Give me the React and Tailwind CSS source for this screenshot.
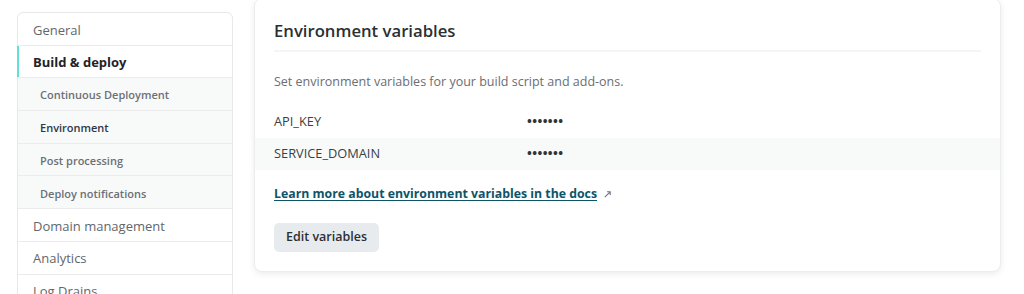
import React from "react";

const font = { fontFamily: '"Open Sans", "Noto Sans", sans-serif' };

function SideItem({ label, active, sub, dark }) {
  if (sub) {
    return (
      <div className={`h-[32.7px] flex items-center pt-[3px] pl-[22px] border-b border-[#ececec] bg-[#f8fafa] text-[11px] font-semibold ${dark ? "text-[#2d3748]" : "text-[#6b7076]"}`}>
        {label}
      </div>
    );
  }
  return (
    <div className={`relative h-[32.7px] flex items-center pt-[3px] pl-[15px] border-b border-[#ececec] text-[13px] ${active ? "font-bold text-[#1f2328]" : "text-[#62676c]"}`}>
      {active && <span className="absolute left-[-1px] top-0 bottom-0 w-[2px] bg-[#5ee2d6]" />}
      {label}
    </div>
  );
}

export default function App() {
  return (
    <div className="w-[1024px] h-[294px] overflow-hidden bg-white flex items-start" style={font}>
      <div className="ml-[17px] mt-[12px] w-[216px] shrink-0 border border-[#e8e8e8] rounded-t-[6px] bg-white">
        <SideItem label="General" />
        <SideItem label="Build & deploy" active />
        <SideItem label="Continuous Deployment" sub />
        <SideItem label="Environment" sub dark />
        <SideItem label="Post processing" sub />
        <SideItem label="Deploy notifications" sub />
        <SideItem label="Domain management" />
        <SideItem label="Analytics" />
        <SideItem label="Log Drains" />
      </div>

      <div className="ml-[21px] mt-[-2px] w-[747px] shrink-0 rounded-[8px] bg-white border border-[#ededed] shadow-[0_2px_6px_rgba(0,0,0,0.08)] pb-[19px]">
        <div className="mx-[19px] pt-[20px] pb-[7px] border-b-2 border-[#f4f5f5]">
          <h2 className="text-[16.7px] leading-[24px] font-semibold text-[#2b2f33]">Environment variables</h2>
        </div>
        <p className="mx-[19px] mt-[20px] text-[12.5px] leading-[20px] text-[#6a6e72]">
          Set environment variables for your build script and add-ons.
        </p>
        <div className="mt-[13px]">
          <div className="h-[33px] flex items-center px-[19px] text-[12.8px] text-[#3a3f44]">
            <span className="w-[253px]">API_KEY</span>
            <span className="font-bold tracking-[0.4px] text-[#333]">•••••••</span>
          </div>
          <div className="h-[32px] flex items-center px-[19px] text-[12.8px] text-[#3a3f44] bg-[#f8fafa]">
            <span className="w-[253px]">SERVICE_DOMAIN</span>
            <span className="font-bold tracking-[0.4px] text-[#333]">•••••••</span>
          </div>
        </div>
        <div className="mx-[19px] mt-[14px] flex items-center gap-[6px]">
          <a className="text-[12.3px] leading-[20px] font-bold text-[#0e5468] underline underline-offset-2">
            Learn more about environment variables in the docs
          </a>
          <svg width="9" height="9" viewBox="0 0 10 10" className="text-[#6b7280]">
            <path d="M2 8L8 2M4.5 2H8V5.5" stroke="currentColor" strokeWidth="1.2" fill="none" />
          </svg>
        </div>
        <div className="mx-[19px] mt-[19px]">
          <button className="h-[29px] w-[105px] rounded-[5px] bg-[#e8ebee] text-[12.5px] font-semibold text-[#2b2f33]">
            Edit variables
          </button>
        </div>
      </div>
    </div>
  );
}
